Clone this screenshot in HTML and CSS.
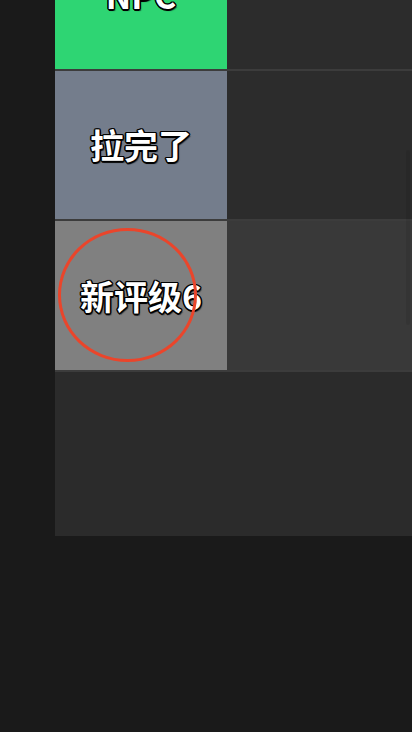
FILE: index.html
```html
<!DOCTYPE html>
<html lang="zh">
<head>
<meta charset="utf-8">
<link rel="stylesheet" href="styles.css">
</head>
<body>
<div class="board">
  <div class="tier">
    <div class="label green"><span class="txt">NPC</span></div>
    <div class="items"></div>
  </div>
  <div class="tier">
    <div class="label slate"><span class="txt">拉完了</span></div>
    <div class="items"></div>
  </div>
  <div class="tier tall">
    <div class="label gray"><span class="txt">新评级6</span><div class="ring"></div></div>
    <div class="items active"></div>
  </div>
  <div class="empty"></div>
  <div class="thumb"></div>
</div>
</body>
</html>
```
FILE: styles.css
```css
html, body {
  margin: 0;
  padding: 0;
  background: #1a1a1a;
  height: 100%;
  overflow: hidden;
}
.board {
  position: relative;
  margin-top: -79px;
  margin-left: 55px;
  background: #2b2b2b;
  display: flex;
  flex-direction: column;
}
.tier {
  display: flex;
  height: 148px;
  border-bottom: 2px solid #3c3c3c;
}
.tier.tall {
  height: 149px;
}
.label {
  position: relative;
  width: 172px;
  flex: none;
  display: flex;
  align-items: center;
  justify-content: center;
}
.green { background: #2ed573; }
.slate { background: #747d8c; }
.gray { background: #808080; }
.txt {
  font-family: "Noto Sans CJK SC", "Noto Sans", sans-serif;
  font-weight: 700;
  font-size: 34px;
  line-height: 1;
  color: #fff;
  text-shadow:
    1.5px 0 0 #000, -1.5px 0 0 #000, 0 1.5px 0 #000, 0 -1.5px 0 #000,
    1px 1px 0 #000, -1px -1px 0 #000, 1px -1px 0 #000, -1px 1px 0 #000,
    1.5px 1.5px 1px rgba(0,0,0,0.6);
  position: relative;
  z-index: 1;
}
.items {
  flex: 1;
  background: #2c2c2c;
}
.items.active {
  background: #393939;
}
.empty {
  height: 164px;
  background: #2b2b2b;
}
.ring {
  position: absolute;
  left: 3px;
  top: 7px;
  width: 133px;
  height: 128px;
  border: 3px solid #ea452b;
  border-radius: 50%;
  z-index: 2;
}
.thumb {
  position: absolute;
  right: 2px;
  top: 229px;
  width: 4px;
  height: 175px;
  background: rgba(0,0,0,0.08);
  border-radius: 2px;
}
```
